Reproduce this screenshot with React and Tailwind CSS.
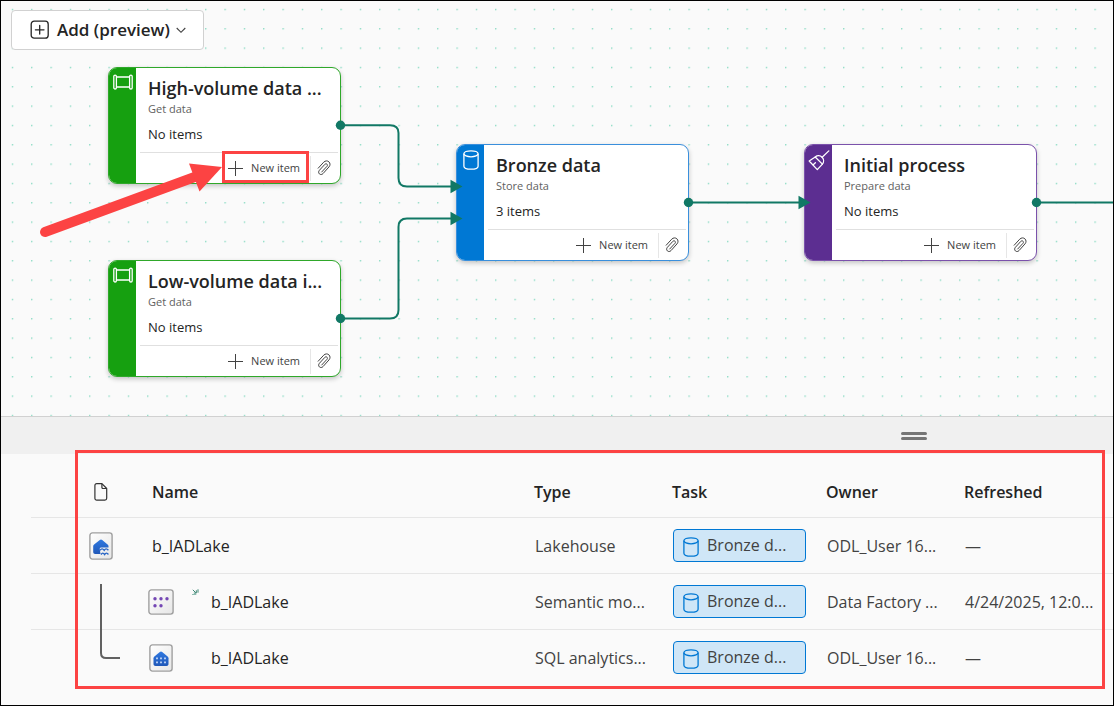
import React from "react";

const TEAL = "#117865";

function PipeIcon() {
  return (
    <svg width="20" height="18" viewBox="0 0 20 18" fill="none" stroke="#fff" strokeWidth="1.3" aria-hidden="true">
      <rect x="0.8" y="2.2" width="2.6" height="13.8" rx="1.3" />
      <rect x="16.6" y="2.2" width="2.6" height="13.8" rx="1.3" />
      <path d="M3.4 4.1h13.2M3.4 14.1h13.2" strokeWidth="1.5" />
    </svg>
  );
}

function CylinderIcon({ color }) {
  return (
    <svg width="16" height="20" viewBox="0 0 16 20" fill="none" stroke={color} strokeWidth="1.3" className="shrink-0" aria-hidden="true">
      <ellipse cx="8" cy="3.8" rx="7.1" ry="3" />
      <path d="M0.9 3.8v12.4c0 1.7 3.2 3 7.1 3s7.1-1.3 7.1-3V3.8" />
    </svg>
  );
}

function BroomIcon() {
  return (
    <svg width="22" height="21" viewBox="0 0 22 21" fill="none" stroke="#fff" strokeWidth="1.3" strokeLinejoin="round" strokeLinecap="round" aria-hidden="true">
      <path d="M20.8 0.9 14.2 7.3" />
      <path d="M7.2 7c2-1.700 5-1.700 6.900.2 1.900 1.900 1.900 4.900.3 6.900L9.300 19.600 1.200 11z" />
      <path d="M7.200 7l7.200 7.100" />
      <path d="M5.200 14.800l2.200-2" />
    </svg>
  );
}

function PlusIcon() {
  return (
    <svg width="16" height="16" viewBox="0 0 16 16" stroke="#424242" strokeWidth="1" aria-hidden="true">
      <path d="M8.5 1v15M1 8.5h15" />
    </svg>
  );
}

function ClipIcon() {
  return (
    <svg width="14" height="16" viewBox="0 0 14 16" fill="none" stroke="#424242" strokeWidth="1" strokeLinecap="round" aria-hidden="true">
      <path d="M1.2 8.2 6.7 2.2C8.3.5 10.600.6 11.900 1.8c1.400 1.300 1.500 3.500.1 5.100L6 13.600c-1 1.100-2.600 1.200-3.600.3-1-.9-1-2.500 0-3.600l5.500-6c.6-.6 1.500-.7 2.100-.1.6.5.6 1.400 0 2.100L4.700 12" />
    </svg>
  );
}

const NODES = [
  { id: "high", title: "High-volume data ...", kind: "Get data", items: "No items", icon: <PipeIcon />, pos: "left-[107px] top-[66px]", border: "border-[#2fa82a]", stripe: "bg-[#16a010]" },
  { id: "low", title: "Low-volume data i...", kind: "Get data", items: "No items", icon: <PipeIcon />, pos: "left-[107px] top-[259px]", border: "border-[#2fa82a]", stripe: "bg-[#16a010]" },
  { id: "bronze", title: "Bronze data", kind: "Store data", items: "3 items", icon: <CylinderIcon color="#fff" />, pos: "left-[455px] top-[143px]", border: "border-[#3a8fdc]", stripe: "bg-[#0078d4]" },
  { id: "initial", title: "Initial process", kind: "Prepare data", items: "No items", icon: <BroomIcon />, pos: "left-[803px] top-[143px]", border: "border-[#7b52ab]", stripe: "bg-[#5c2e91]" },
];

function TaskNode({ node }) {
  return (
    <article className={`absolute flex h-[117px] w-[233px] overflow-hidden rounded-[9px] border bg-white shadow-[0_2px_5px_rgba(0,0,0,0.22)] ${node.pos} ${node.border}`}>
      <div className={`flex w-[27px] shrink-0 justify-center pt-[5px] ${node.stripe}`}>{node.icon}</div>
      <div className="flex min-w-0 flex-1 flex-col">
        <div className="flex flex-1 flex-col pl-3">
          <h2 className="mt-2 whitespace-nowrap text-lg leading-6 font-semibold text-[#242424]">{node.title}</h2>
          <p className="mt-px text-[11px] leading-4 text-[#616161]">{node.kind}</p>
          <p className="mt-[7px] text-[13px] leading-5 text-[#242424]">{node.items}</p>
        </div>
        <div className="mr-[2px] ml-1 flex h-[31px] items-center justify-end border-t border-[#e0e0e0] pr-[7px]">
          <button type="button" className="flex items-center gap-2 text-[11px] leading-4 text-[#424242]">
            <PlusIcon />
            New item
          </button>
          <span className="mr-[6px] ml-[10px] h-[25px] w-px bg-[#e6e6e6]" />
          <button type="button" aria-label="Attach"><ClipIcon /></button>
        </div>
      </div>
    </article>
  );
}

function Connectors() {
  return (
    <svg className="pointer-events-none absolute inset-0 h-full w-full" aria-hidden="true">
      <g fill="none" stroke={TEAL} strokeWidth="2">
        <path d="M340 124.300H389Q397.500 124.300 397.500 132V177Q397.500 185.500 406 185.500H452" />
        <path d="M340 317.500H389Q397.500 317.500 397.500 309V226Q397.500 217.500 406 217.500H452" />
        <path d="M688 201.500H800M1036 201.500H3000" />
      </g>
      <g fill={TEAL}>
        <circle cx="339.500" cy="124.300" r="4.700" />
        <circle cx="339.500" cy="317.500" r="4.700" />
        <circle cx="687.500" cy="201.500" r="4.700" />
        <circle cx="1035.500" cy="201.500" r="4.700" />
        <path d="M449.500 178.700v13.500l12-6.700zM449.500 210.700v13.500l12-6.700zM797.500 194.700v13.500l12-6.700z" />
      </g>
    </svg>
  );
}

function Canvas() {
  return (
    <section aria-label="Task flow" className="relative min-h-[400px] flex-1 overflow-hidden bg-[#fafafa]">
      <svg className="absolute inset-0 h-full w-full" aria-hidden="true">
        <defs>
          <pattern id="dots" x="10.800" y="7.800" width="19.333" height="19.333" patternUnits="userSpaceOnUse">
            <circle cx="0.700" cy="0.700" r="0.700" fill="#5fcfae" />
          </pattern>
        </defs>
        <rect width="100%" height="100%" fill="url(#dots)" />
      </svg>
      {NODES.map((n) => <TaskNode key={n.id} node={n} />)}
      <Connectors />
      <button type="button" className="absolute top-[9px] left-[10px] flex h-10 w-[193px] items-center rounded border border-[#d1d1d1] bg-white pl-[18px] text-[17px] leading-6 font-semibold text-[#242424]">
        <svg width="20" height="20" viewBox="0 0 20 20" fill="none" stroke="#242424" strokeWidth="1.300" strokeLinecap="round" aria-hidden="true">
          <rect x="1.200" y="1.200" width="17" height="17" rx="3" />
          <path d="M9.700 5.500v8.600M5.400 9.800H14" />
        </svg>
        <span className="ml-[7px]">Add (preview)</span>
        <svg width="10" height="7" viewBox="0 0 10 7" fill="none" stroke="#424242" strokeWidth="1.100" className="ml-[6px]" aria-hidden="true">
          <path d="M0.700 1 5 5.300 9.300 1" />
        </svg>
      </button>
      <div className="pointer-events-none absolute top-[150px] left-[221px] h-8 w-[87px] border-3 border-[#fc4343]" />
      <svg className="pointer-events-none absolute top-[155px] left-[35px]" width="190" height="85" viewBox="0 0 190 85" aria-hidden="true">
        <path d="M9 76 160 20.500" stroke="#fc4343" strokeWidth="10" strokeLinecap="round" />
        <path d="M186 11 153 7.500 163.500 35.500z" fill="#fc4343" />
      </svg>
    </section>
  );
}

function FileFrame({ w, h }) {
  return <rect x="0.900" y="0.900" width={w - 1.800} height={h - 1.800} rx="2.500" fill="url(#paper)" stroke="#a0a0a0" strokeWidth="1.400" />;
}

function LakehouseIcon() {
  return (
    <svg width="24" height="28" viewBox="0 0 24 28" aria-hidden="true">
      <defs>
        <linearGradient id="paper" x1="0" y1="0" x2="1" y2="1">
          <stop offset="0" stopColor="#fff" />
          <stop offset="1" stopColor="#e6e6e6" />
        </linearGradient>
        <linearGradient id="house" x1="0" y1="0" x2="0" y2="1">
          <stop offset="0" stopColor="#2f78e0" />
          <stop offset="1" stopColor="#2058b8" />
        </linearGradient>
      </defs>
      <FileFrame w={24} h={28} />
      <path d="M12 7.500c.4 0 .8.200 1.200.500l5.400 4.400c.6.500.9 1.100.9 1.800v1.300h-7.500c-1 0-1.500 1-1.200 2l.7 4.600H6.200c-1.200 0-2-.8-2-2V14.200c0-.7.3-1.300.9-1.800L10.800 8c.4-.3.800-.5 1.200-.500z" fill="url(#house)" />
      <path d="M11 18.300c1.500-1.900 2.700-1.900 4.200 0 1.200-1.900 2.700-1.900 4.200 0M12 22.500c1.300-1.800 2.300-1.800 3.600 0 1.200-1.800 2.500-1.800 3.800 0" fill="none" stroke="#2563c4" strokeWidth="1.400" />
    </svg>
  );
}

function SemanticIcon() {
  return (
    <svg width="26" height="26" viewBox="0 0 26 26" aria-hidden="true">
      <FileFrame w={26} h={26} />
      <g fill="#7447b4">
        <circle cx="7" cy="9.800" r="1.700" /><circle cx="13" cy="9.800" r="1.700" /><circle cx="19" cy="9.800" r="1.700" />
        <circle cx="7" cy="16.700" r="1.700" /><circle cx="13" cy="16.700" r="1.700" />
      </g>
    </svg>
  );
}

function EndpointIcon() {
  return (
    <svg width="24" height="28" viewBox="0 0 24 28" aria-hidden="true">
      <FileFrame w={24} h={28} />
      <path d="M12 7.500c.4 0 .8.200 1.200.500l5.400 4.400c.6.500.9 1.100.9 1.800V20c0 1.200-.8 2-2 2h-11c-1.200 0-2-.8-2-2v-5.800c0-.7.3-1.300.9-1.800L10.800 8c.4-.3.800-.5 1.200-.500z" fill="url(#house)" />
      <path d="M7.200 13.600h1.600v1.600H7.200zM11.200 13.600h1.600v1.600h-1.600zM15.200 13.600h1.600v1.600h-1.600zM7.200 17.600h1.600v1.600H7.200zM11.200 17.600h1.600v1.600h-1.600zM15.200 17.600h1.600v1.600h-1.600z" fill="#d6e6ff" />
    </svg>
  );
}

function TaskChip() {
  return (
    <button type="button" className="flex h-[33px] w-full items-center gap-2 rounded border border-[#0078d4] bg-[#cfe6f7] px-[9px] text-left">
      <span className="mt-1 flex"><CylinderIcon color="#0078d4" /></span>
      <span className="whitespace-nowrap text-[#424242]">Bronze d...</span>
    </button>
  );
}

const ROWS = [
  { id: 1, icon: <LakehouseIcon />, type: "Lakehouse", owner: "ODL_User 16...", refreshed: "—" },
  { id: 2, child: true, icon: <SemanticIcon />, type: "Semantic mo...", owner: "Data Factory ...", refreshed: "4/24/2025, 12:0..." },
  { id: 3, child: true, icon: <EndpointIcon />, type: "SQL analytics...", owner: "ODL_User 16...", refreshed: "—" },
];

function ItemsTable() {
  return (
    <section aria-label="Items" className="relative pb-5 pl-[30px]">
      <table className="w-full table-fixed text-left text-base leading-6 text-[#424242]">
        <colgroup>
          <col className="w-[113px]" />
          <col />
          <col className="w-[138px]" />
          <col className="w-[154px]" />
          <col className="w-[138px]" />
          <col className="w-[157px]" />
        </colgroup>
        <thead>
          <tr className="h-[63px] border-b border-[#e6e6e6] text-[#242424]">
            <th aria-label="Item type" className="pt-[14px] pl-[62px]">
              <svg width="16" height="20" viewBox="0 0 16 20" fill="none" stroke="#333" strokeWidth="1.200" strokeLinejoin="round" aria-hidden="true">
                <path d="M3.700 1.700h5.200l4.800 4.800v9.800c0 1-.8 1.800-1.800 1.800H3.700c-1 0-1.800-.8-1.800-1.800V3.500c0-1 .8-1.800 1.800-1.800z" />
                <path d="M8.900 1.700v3.600c0 .8.500 1.200 1.200 1.200h3.600" />
              </svg>
            </th>
            <th className="px-2 pt-[14px] font-semibold">Name</th>
            <th className="px-2 pt-[14px] font-semibold">Type</th>
            <th className="px-2 pt-[14px] font-semibold">Task</th>
            <th className="px-2 pt-[14px] font-semibold">Owner</th>
            <th className="px-2 pt-[14px] font-semibold">Refreshed</th>
          </tr>
        </thead>
        <tbody>
          {ROWS.map((r) => (
            <tr key={r.id} className="h-14 border-b border-[#e6e6e6] last:border-b-0">
              <td className="relative pt-[2px] pl-[58px]">
                {!r.child && r.icon}
                {r.id === 2 && (
                  <svg className="absolute top-[10px] left-[68px]" width="22" height="80" viewBox="0 0 22 80" fill="none" stroke="#616161" strokeWidth="2" aria-hidden="true">
                    <path d="M2 0v69q0 5 5 5h14" />
                  </svg>
                )}
              </td>
              <td className="px-2 pt-[2px] text-[#242424]">
                {r.child ? (
                  <div className="-ml-1 flex items-center">
                    <span className="flex w-[26px] justify-center">{r.icon}</span>
                    <span className="flex w-[37px] justify-end self-start">
                      {r.id === 2 && (
                        <svg width="7" height="7" viewBox="0 0 7 7" fill="none" stroke="#3b8573" strokeWidth="1" className="mr-3" aria-hidden="true">
                          <path d="M0.800 0.800 3.800 3.800M4.300 1.300v2.800H1.800M6 0.300v3.400" />
                          <path d="M0 5.500h4.300" stroke="#8dbcb0" />
                        </svg>
                      )}
                    </span>
                    b_IADLake
                  </div>
                ) : "b_IADLake"}
              </td>
              <td className="whitespace-nowrap pt-[2px] pl-[9px]">{r.type}</td>
              <td className="pr-3 pl-[9px]"><TaskChip /></td>
              <td className="whitespace-nowrap pt-[2px] pl-[9px]">{r.owner}</td>
              <td className="whitespace-nowrap pt-[2px] pl-[9px]">{r.refreshed}</td>
            </tr>
          ))}
        </tbody>
      </table>
      <div className="pointer-events-none absolute -top-1 right-2 bottom-4 left-[74px] border-3 border-[#fc4343]" />
    </section>
  );
}

export default function App() {
  return (
    <main className="flex min-h-screen flex-col border border-black bg-[#fafafa] font-['Open_Sans','Noto_Sans',sans-serif]">
      <Canvas />
      <div role="separator" aria-orientation="horizontal" className="flex h-[38px] items-center justify-end border-t border-[#d1d1d1] bg-[#f0f0f0] pr-[186px]">
        <div className="flex w-[26px] flex-col gap-[2px]">
          <span className="h-[3px] rounded-full bg-[#757575]" />
          <span className="h-[3px] rounded-full bg-[#757575]" />
        </div>
      </div>
      <ItemsTable />
    </main>
  );
}
